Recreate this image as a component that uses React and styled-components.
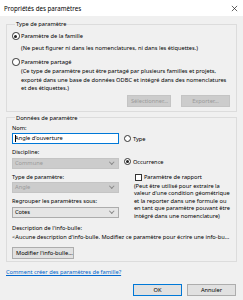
import React from 'react'
import styled, { createGlobalStyle } from 'styled-components'

const Global = createGlobalStyle`
  html, body {
    margin: 0;
    padding: 0;
    background: #f0f0f0;
  }
  * { box-sizing: border-box; }
`

function App() {
  return (
    <Window>
      <Global />
      <TitleBar>
        <span>Propriétés des paramètres</span>
        <CloseIcon viewBox="0 0 8 8">
          <path d="M1 1 L7 7 M7 1 L1 7" stroke="#222" strokeWidth="0.8" />
        </CloseIcon>
      </TitleBar>

      <Body>
        <Group $top={4} $bottom={4}>
          <Legend>Type de paramètre</Legend>
          <RadioRow $mt={3}>
            <Radio $checked />
            <span>Paramètre de la famille</span>
          </RadioRow>
          <Note $mt={3}>(Ne peut figurer ni dans les nomenclatures, ni dans les étiquettes.)</Note>
          <RadioRow $mt={4}>
            <Radio />
            <span>Paramètre partagé</span>
          </RadioRow>
          <Note $lh={8.5}>
            (Ce type de paramètre peut être partagé par plusieurs familles et projets,<br />
            exporté dans une base de données ODBC et intégré dans des nomenclatures<br />
            et des étiquettes.)
          </Note>
          <ButtonRow>
            <Button disabled $w={44}>Sélectionner...</Button>
            <Button disabled $w={49}>Exporter...</Button>
          </ButtonRow>
        </Group>

        <Group $top={2} $bottom={2}>
          <Legend>Données de paramètre</Legend>
          <Columns>
            <LeftCol>
              <Label $mt={2}>Nom:</Label>
              <TextInput $mt={1}>
                <Caret />Angle d'ouverture
              </TextInput>
              <Label $mt={4}>Discipline:</Label>
              <Select $mt={2} $disabled>Commune<Chevron /></Select>
              <Label $mt={4}>Type de paramètre:</Label>
              <Select $mt={1} $disabled>Angle<Chevron /></Select>
              <Label $mt={4}>Regrouper les paramètres sous:</Label>
              <Select $mt={2}>Cotes<Chevron /></Select>
            </LeftCol>
            <RightCol>
              <RadioRow $mt={12}>
                <Radio />
                <span>Type</span>
              </RadioRow>
              <RadioRow $mt={13}>
                <Radio $checked />
                <span>Occurrence</span>
              </RadioRow>
              <CheckRow>
                <Check />
                <span>Paramètre de rapport</span>
              </CheckRow>
              <SideNote>
                (Peut être utilisé pour extraire la<br />
                valeur d'une condition géométrique<br />
                et la reporter dans une formule ou<br />
                en tant que paramètre pouvant être<br />
                intégré dans une nomenclature)
              </SideNote>
            </RightCol>
          </Columns>
          <Label $mt={4}>Description de l'info-bulle:</Label>
          <Label $mt={1}>&lt;Aucune description d'info-bulle. Modifiez ce paramètre pour écrire une info-bu...</Label>
          <Button $mt={6} $w={62}>Modifier l'info-bulle...</Button>
        </Group>

        <Link href="#">Comment créer des paramètres de famille?</Link>

        <Footer>
          <Button $primary $w={49}>OK</Button>
          <Button $w={49}>Annuler</Button>
        </Footer>
      </Body>
    </Window>
  )
}

export default App

const Window = styled.div`
  width: 243px;
  height: 300px;
  overflow: hidden;
  background: #f0f0f0;
  font-family: "Noto Sans", "Open Sans", sans-serif;
  font-size: 5.7px;
  color: #000;
  display: flex;
  flex-direction: column;
`

const TitleBar = styled.div`
  height: 16px;
  flex: none;
  background: #fff;
  display: flex;
  align-items: center;
  justify-content: space-between;
  padding: 0 5px 0 4px;
  font-size: 6.2px;
  color: #000;
`

const CloseIcon = styled.svg`
  width: 7px;
  height: 7px;
`

const Body = styled.div`
  padding: 0 6px;
  display: flex;
  flex-direction: column;
`

const Group = styled.fieldset`
  margin: ${p => p.$top}px 0 0 0;
  padding: 0 6px ${p => p.$bottom}px 5px;
  border: 1px solid #dcdcdc;
  min-width: 0;
  display: flex;
  flex-direction: column;
  align-items: flex-start;
`

const Legend = styled.legend`
  padding: 0 1px;
  margin-left: 3px;
  line-height: 8px;
`

const RadioRow = styled.div`
  display: flex;
  align-items: center;
  height: 10px;
  gap: 1.5px;
  margin-top: ${p => p.$mt || 0}px;
  white-space: nowrap;
`

const Radio = styled.span`
  width: 7.5px;
  height: 7.5px;
  border-radius: 50%;
  border: 1px solid #333;
  background: #fff;
  position: relative;
  flex: none;

  &::after {
    content: '';
    display: ${p => (p.$checked ? 'block' : 'none')};
    position: absolute;
    left: 1.25px;
    top: 1.25px;
    width: 3px;
    height: 3px;
    border-radius: 50%;
    background: #222;
  }
`

const Note = styled.div`
  margin: ${p => p.$mt || 0}px 0 0 9px;
  line-height: ${p => p.$lh || 9}px;
  white-space: nowrap;
`

const ButtonRow = styled.div`
  align-self: stretch;
  display: flex;
  justify-content: flex-end;
  gap: 10px;
  margin-top: 2px;
`

const Button = styled.button`
  font: inherit;
  height: 12px;
  margin: ${p => p.$mt || 0}px 0 0 0;
  padding: 0 3px;
  width: ${p => (p.$w ? `${p.$w}px` : 'auto')};
  background: #e1e1e1;
  border: 1px solid ${p => (p.$primary ? '#0078d7' : '#adadad')};
  color: #000;
  line-height: 10px;
  white-space: nowrap;

  &:disabled {
    background: #cccccc;
    border-color: #c4c4c4;
    color: #9a9a9a;
  }
`

const Columns = styled.div`
  align-self: stretch;
  display: flex;
  gap: 5px;
`

const LeftCol = styled.div`
  width: 107px;
  display: flex;
  flex-direction: column;
`

const RightCol = styled.div`
  flex: 1;
  display: flex;
  flex-direction: column;
`

const Label = styled.div`
  line-height: 8px;
  margin-top: ${p => p.$mt || 0}px;
  white-space: nowrap;
`

const TextInput = styled.div`
  height: 11px;
  margin-top: ${p => p.$mt || 0}px;
  background: #fff;
  border: 1px solid #0078d7;
  display: flex;
  align-items: center;
  padding-left: 2px;
`

const Caret = styled.span`
  width: 1px;
  height: 7px;
  background: #000;
  margin-right: -1px;
`

const Select = styled.div`
  height: 11px;
  margin-top: ${p => p.$mt || 0}px;
  background: ${p => (p.$disabled ? '#cccccc' : '#e5e5e5')};
  border: 1px solid ${p => (p.$disabled ? '#c4c4c4' : '#acacac')};
  color: ${p => (p.$disabled ? '#9a9a9a' : '#000')};
  display: flex;
  align-items: center;
  justify-content: space-between;
  padding: 0 4px 0 2px;
`

const Chevron = styled.span`
  width: 3.5px;
  height: 3.5px;
  border-right: 1px solid #8a8a8a;
  border-bottom: 1px solid #8a8a8a;
  transform: translateY(-1px) rotate(45deg);
`

const CheckRow = styled.div`
  display: flex;
  align-items: center;
  gap: 2px;
  margin: 6px 0 0 11px;
  height: 9px;
  white-space: nowrap;
`

const Check = styled.span`
  width: 7px;
  height: 7px;
  border: 1px solid #333;
  background: #fff;
`

const SideNote = styled.div`
  margin: 1px 0 0 10px;
  line-height: 7.5px;
  white-space: nowrap;
`

const Link = styled.a`
  margin-top: 6px;
  line-height: 8px;
  color: #0066cc;
  text-decoration: underline;
`

const Footer = styled.div`
  display: flex;
  justify-content: flex-end;
  gap: 5px;
  margin: 8px 1px 0 0;
`
